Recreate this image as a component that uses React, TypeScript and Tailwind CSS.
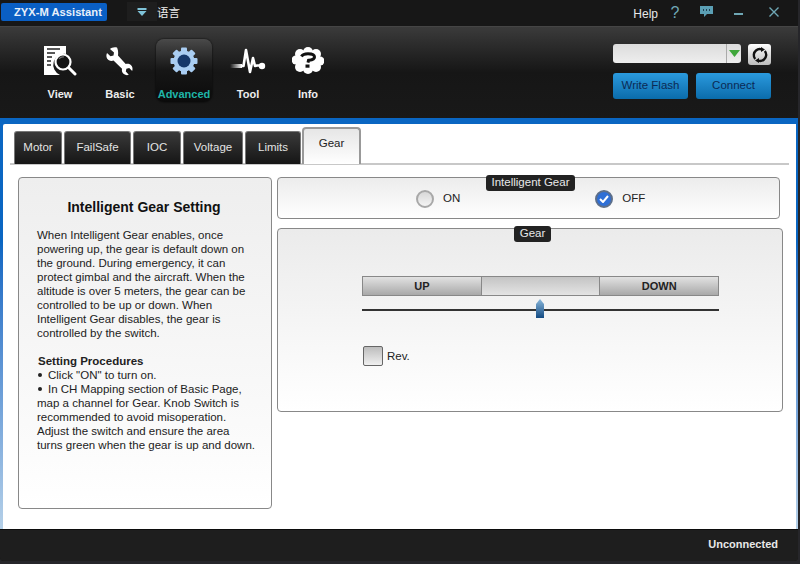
import React from "react";

const font = "font-['Liberation_Sans',Arial,'Noto_Sans_CJK_SC',sans-serif]";

function ViewIcon() {
  return (
    <svg width="34" height="32" viewBox="0 0 34 32">
      <path d="M1 1h22v8a11 11 0 0 0-6 21H1z" fill="#fff" />
      <path d="M4 4h13M4 8h8M4 12h5M4 16h4M4 20h4" stroke="#222" strokeWidth="1.6" />
      <circle cx="20" cy="17" r="7.5" fill="#151515" stroke="#fff" strokeWidth="2.2" />
      <path d="M16 14a5 5 0 0 1 5-2" stroke="#777" strokeWidth="1.2" fill="none" />
      <path d="M26 23l6 6" stroke="#fff" strokeWidth="3" strokeLinecap="round" />
    </svg>
  );
}

function WrenchIcon() {
  return (
    <svg width="30" height="30" viewBox="0 0 30 30">
      <path
        d="M12 1.500c-3-.8-5.500.2-7 1.500l4 3.500-.5 3-3 .8L2 7c-1.300 2.800-.5 5.500 1.500 7 1.800 1.200 3.500 1.200 5 .6l8.500 8.200c-.5 2.300.2 4 1.800 5.300 1.500 1.100 3.400 1.300 5 .7l-3-3.300.6-2.700 2.800-.8 3 3c.8-2.300.3-4.500-1.300-6-1.400-1.300-3.300-1.700-5.200-1.100L13 9.500c.5-3.500-.2-6.500-1-8z"
        fill="#fff"
      />
    </svg>
  );
}

function GearIcon() {
  const teeth = [0, 45, 90, 135, 180, 225, 270, 315];
  return (
    <svg width="28" height="28" viewBox="0 0 28 28">
      {teeth.map((a) => (
        <rect key={a} x="11" y="0.500" width="6" height="6" rx="1" fill="#a9cdf2" transform={`rotate(${a} 14 14)`} />
      ))}
      <circle cx="14" cy="14" r="10.500" fill="#a9cdf2" />
      <circle cx="14" cy="14" r="6.500" fill="#16386a" />
    </svg>
  );
}

function ToolIcon() {
  return (
    <svg width="36" height="28" viewBox="0 0 36 28">
      <defs>
        <linearGradient id="fade" x1="0" x2="1" y1="0" y2="0">
          <stop offset="0" stopColor="#fff" stopOpacity="0" />
          <stop offset="1" stopColor="#fff" />
        </linearGradient>
      </defs>
      <rect x="0" y="17" width="12" height="4" fill="url(#fade)" />
      <path
        d="M11 19h2.500l2.500-16 4 22 3-14 2 8 2-.5h5"
        fill="none"
        stroke="#fff"
        strokeWidth="2.600"
        strokeLinejoin="round"
      />
      <circle cx="32" cy="19" r="3.200" fill="#fff" />
    </svg>
  );
}

function InfoIcon() {
  const bumps = [
    [8, 7, 5],
    [16, 5, 5],
    [24, 7, 5],
    [28, 14, 4.5],
    [24, 20, 5],
    [16, 22, 5],
    [8, 20, 5],
    [4, 13, 4.5],
  ];
  return (
    <svg width="32" height="27" viewBox="0 0 32 27">
      {bumps.map(([x, y, r]) => (
        <circle key={`${x}-${y}`} cx={x} cy={y} r={r} fill="#fff" />
      ))}
      <ellipse cx="16" cy="13.500" rx="12" ry="9" fill="#fff" />
      <path
        d="M9.500 9.500c1-2 3.500-2.800 6.500-2.800 3.500 0 6.500 1 6.500 3.300 0 2.800-3.500 3-6 3.300l-.5 2.300"
        fill="none"
        stroke="#111"
        strokeWidth="3"
      />
      <rect x="13.500" y="17.500" width="4" height="3.200" fill="#111" />
    </svg>
  );
}

function RefreshIcon() {
  return (
    <svg width="16" height="16" viewBox="0 0 16 16" fill="none">
      <path d="M3.200 12a6 6 0 0 1 .8-8.500A6 6 0 0 1 9.500 2.300" stroke="#111" strokeWidth="2.400" />
      <path d="M12.800 4a6 6 0 0 1-.8 8.500 6 6 0 0 1-5.500 1.200" stroke="#111" strokeWidth="2.400" />
      <path d="M9 0v5l4-2.500zM7 16v-5l-4 2.500z" fill="#111" />
    </svg>
  );
}

function NavItem({ label, icon, active, w }: { label: string; icon: React.ReactNode; active?: boolean; w: string }) {
  return (
    <div
      className={`flex flex-col items-center h-[63px] rounded-lg ${w} ${
        active ? "bg-gradient-to-b from-[#4a4a4a] via-[#161616] to-[#0b0b0b] shadow-[0_0_2px_#000]" : ""
      }`}
    >
      <div className="h-[37px] mt-[3px] flex items-center justify-center">{icon}</div>
      <span className={`mt-[8px] text-[11px] leading-[14px] font-bold ${active ? "text-[#1fb5a8]" : "text-[#eeeeee]"}`}>
        {label}
      </span>
    </div>
  );
}

function Tab({ label, w }: { label: string; w: string }) {
  return (
    <div
      className={`${w} h-[33px] flex items-center justify-center rounded-t-[3px] border-t border-x border-[#777] bg-gradient-to-b from-[#3a3a3a] to-[#161616] text-[11.500px] text-[#e4e4e4]`}
    >
      {label}
    </div>
  );
}

function Legend({ label, className }: { label: string; className: string }) {
  return (
    <div
      className={`absolute h-[16px] flex items-center justify-center rounded-[3px] bg-[#222222] text-[11.500px] text-[#e8e8e8] ${className}`}
    >
      {label}
    </div>
  );
}

function BarCell({ label, middle }: { label?: string; middle?: boolean }) {
  return (
    <div
      className={`flex-1 flex items-center justify-center text-[11px] font-bold text-[#222] ${
        middle
          ? "bg-gradient-to-b from-[#c4c4c4] to-[#e4e4e4] border-x border-[#888]"
          : "bg-gradient-to-b from-[#e2e2e2] to-[#a9a9a9]"
      }`}
    >
      {label}
    </div>
  );
}

function Dot() {
  return <span className="inline-block w-[4px] h-[4px] rounded-full bg-[#222] mr-[6px] align-[2px]" />;
}

export default function App() {
  return (
    <div className={`w-[800px] h-[564px] overflow-hidden flex bg-[#26262a] ${font}`}>
      <div className="w-[798px] h-[561px] flex flex-col rounded-b-[4px] overflow-hidden bg-[#151515]">
        {/* title bar */}
        <div className="h-[26px] shrink-0 flex items-start bg-[#171717] text-white">
          <div className="ml-[1px] mt-[3px] w-[106px] h-[18px] pl-[13px] rounded-[2px] bg-[#0a5fc4] flex items-center text-[11.200px] font-bold text-[#e8f0fa]">
            ZYX-M Assistant
          </div>
          <div className="ml-[20px] mt-[2px] w-[30px] h-[19px] bg-[#1e1e1e] flex items-center justify-center pt-[1px]">
            <svg width="10" height="8" viewBox="0 0 10 8">
              <rect x="0.500" y="0" width="9" height="2" fill="#7fc3d8" />
              <path d="M0.500 3h9L5 8z" fill="#7fc3d8" />
            </svg>
          </div>
          <span className="mt-[5px] text-[11.500px] leading-[16px] text-[#eeeeee]">语言</span>
          <div className="ml-auto flex items-center h-[24px]">
            <span className="text-[12px] text-[#e8e8e8] mt-[3px]">Help</span>
            <span className="ml-[10px] w-[14px] text-center text-[16px] leading-[16px] text-[#6fa7b5] mt-[1px]">?</span>
            <svg className="ml-[18px]" width="13" height="12" viewBox="0 0 13 12">
              <path d="M0 0h13v8H7l-3 3V8H0z" fill="#5b9fb4" />
              <path d="M3 4h1M6 4h1M9 4h1" stroke="#123" strokeWidth="1.400" />
            </svg>
            <span className="ml-[21px] w-[9px] h-[2px] bg-[#6fa7b5] mt-[3px]" />
            <svg className="ml-[26px] mr-[19px]" width="10" height="10" viewBox="0 0 10 10">
              <path d="M0.500 0.500l9 9M9.500 0.500l-9 9" stroke="#6fa7b5" strokeWidth="1.400" />
            </svg>
          </div>
        </div>

        {/* header */}
        <div className="h-[92px] shrink-0 flex bg-gradient-to-b from-[#3b3b3b] via-[#161616] to-[#191919] border-t border-[#454545]">
          <div className="ml-[33px] mt-[12px] flex items-start">
            <NavItem w="w-[54px]" label="View" icon={<ViewIcon />} />
            <div className="w-[6px]" />
            <NavItem w="w-[54px]" label="Basic" icon={<WrenchIcon />} />
            <div className="w-[9px]" />
            <NavItem w="w-[56px]" label="Advanced" icon={<GearIcon />} active />
            <div className="w-[9px]" />
            <NavItem w="w-[54px]" label="Tool" icon={<ToolIcon />} />
            <div className="w-[6px]" />
            <NavItem w="w-[54px]" label="Info" icon={<InfoIcon />} />
          </div>
          <div className="ml-auto mr-[27px] mt-[17px] w-[158px] flex flex-col gap-[8px]">
            <div className="flex justify-between items-start">
              <div className="w-[128px] h-[19px] rounded-[3px] bg-gradient-to-b from-[#dcdcdc] to-[#eeeeee] flex justify-end">
                <div className="w-[15px] border-l border-[#aaa] flex items-center justify-center">
                  <svg width="11" height="7" viewBox="0 0 11 7">
                    <path d="M0 0h11L5.500 7z" fill="#3fa63a" />
                  </svg>
                </div>
              </div>
              <div className="w-[23px] h-[21px] rounded-[3px] bg-gradient-to-b from-[#ffffff] to-[#bcbcbc] flex items-center justify-center">
                <RefreshIcon />
              </div>
            </div>
            <div className="flex justify-between">
              <div className="w-[75px] h-[26px] rounded-[3px] bg-gradient-to-b from-[#2a9ade] to-[#0a6cab] flex items-center justify-center text-[11.500px] text-[#0b2a55]">
                Write Flash
              </div>
              <div className="w-[75px] h-[26px] rounded-[3px] bg-gradient-to-b from-[#2a9ade] to-[#0a6cab] flex items-center justify-center text-[11.500px] text-[#0b2a55]">
                Connect
              </div>
            </div>
          </div>
        </div>

        {/* blue band and body */}
        <div className="h-[411px] shrink-0 flex flex-col pt-[6px] pl-[3px] pr-[2px] bg-gradient-to-b from-[#0a66c2] from-[30%] to-[#b5d0e8]">
          <div className="flex-1 bg-white flex flex-col rounded-tl-[2px]">
            {/* tabs */}
            <div className="h-[41px] shrink-0 flex items-end pl-[4px] ml-[7px] mr-[7px] border-b-2 border-[#c8c8c8]">
              <div className="flex items-end gap-[2px] relative top-[1px]">
                <Tab w="w-[48px]" label="Motor" />
                <Tab w="w-[67px]" label="FailSafe" />
                <Tab w="w-[48px]" label="IOC" />
                <Tab w="w-[60px]" label="Voltage" />
                <Tab w="w-[56px]" label="Limits" />
                <div className="-ml-[1px] w-[59px] h-[37px] pb-[6px] flex items-center justify-center rounded-t-[4px] border-t-2 border-x-2 border-[#999] bg-gradient-to-b from-[#e6e6e6] to-[#ffffff] text-[11.500px] text-[#222]">
                  Gear
                </div>
              </div>
            </div>

            {/* content */}
            <div className="flex gap-[5px] pl-[15px] pt-[12px] items-start">
              <div className="w-[254px] h-[332px] shrink-0 rounded-[4px] border border-[#888] bg-gradient-to-b from-[#eeeeee] via-[#fbfbfb] via-80% to-white pl-[18px] pr-[6px] pt-[21px] text-[11.500px] leading-[14px] text-[#222]">
                <div className="text-[14px] leading-[16px] font-bold text-center text-[#111] pr-[14px] mb-[13px]">
                  Intelligent Gear Setting
                </div>
                <div>When Intelligent Gear enables, once</div>
                <div>powering up, the gear is default down on</div>
                <div>the ground. During emergency, it can</div>
                <div>protect gimbal and the aircraft. When the</div>
                <div>altitude is over 5 meters, the gear can be</div>
                <div>controlled to be up or down. When</div>
                <div>Intelligent Gear disables, the gear is</div>
                <div>controlled by the switch.</div>
                <div className="h-[14px]" />
                <div className="font-bold pl-[1px]">Setting Procedures</div>
                <div className="pl-[1px]">
                  <Dot />
                  Click "ON" to turn on.
                </div>
                <div className="pl-[1px]">
                  <Dot />
                  In CH Mapping section of Basic Page,
                </div>
                <div>map a channel for Gear. Knob Switch is</div>
                <div>recommended to avoid misoperation.</div>
                <div>Adjust the switch and ensure the area</div>
                <div>turns green when the gear is up and down.</div>
              </div>

              <div className="flex flex-col gap-[9px] w-[506px]">
                <div className="relative w-[503px] h-[42px] rounded-[4px] border border-[#888] bg-gradient-to-b from-[#ececec] to-white flex items-center text-[11.500px] text-[#222]">
                  <Legend label="Intelligent Gear" className="left-[208px] -top-[3px] w-[89px]" />
                  <div className="ml-[138px] mt-[2px] w-[18px] h-[18px] rounded-full border-2 border-[#a8a8a8] bg-gradient-to-b from-[#d8d8d8] to-[#f4f4f4]" />
                  <span className="ml-[9px] mt-[2px]">ON</span>
                  <div className="ml-[135px] mt-[2px] w-[18px] h-[18px] rounded-full border-2 border-[#5d6f8a] bg-[#2f6fd6] flex items-center justify-center">
                    <svg width="10" height="8" viewBox="0 0 10 8">
                      <path d="M1 4l3 3 5-6" fill="none" stroke="#fff" strokeWidth="2" />
                    </svg>
                  </div>
                  <span className="ml-[9px] mt-[2px]">OFF</span>
                </div>

                <div className="relative w-[506px] h-[184px] rounded-[4px] border border-[#888] bg-gradient-to-b from-[#ebebeb] to-white pl-[84px] pt-[47px]">
                  <Legend label="Gear" className="left-[236px] -top-[3px] w-[37px]" />
                  <div className="w-[357px] h-[20px] flex border border-[#888]">
                    <BarCell label="UP" />
                    <BarCell middle />
                    <BarCell label="DOWN" />
                  </div>
                  <div className="relative w-[357px] h-[2px] mt-[13px] bg-[#333]">
                    <svg className="absolute left-[173px] -top-[10px]" width="10" height="19" viewBox="0 0 10 19">
                      <defs>
                        <linearGradient id="thumb" x1="0" x2="0" y1="0" y2="1">
                          <stop offset="0" stopColor="#8ab8dc" />
                          <stop offset="1" stopColor="#124a82" />
                        </linearGradient>
                      </defs>
                      <path d="M5 0l4 5v14H1V5z" fill="url(#thumb)" />
                    </svg>
                  </div>
                  <div className="flex items-center mt-[35px] ml-[1px] text-[11.500px] text-[#222]">
                    <div className="w-[20px] h-[20px] rounded-[2px] border border-[#666] bg-gradient-to-b from-[#bdbdbd] to-[#f0f0f0]" />
                    <span className="ml-[4px] mt-[1px]">Rev.</span>
                  </div>
                </div>
              </div>
            </div>
          </div>
        </div>

        {/* status bar */}
        <div className="h-[32px] shrink-0 flex items-center justify-end pr-[20px] pb-[3px] bg-[#1e1e1e] border-t border-[#0c0c0c] text-[11px] font-bold text-[#e8e8e8]">
          Unconnected
        </div>
      </div>
    </div>
  );
}
